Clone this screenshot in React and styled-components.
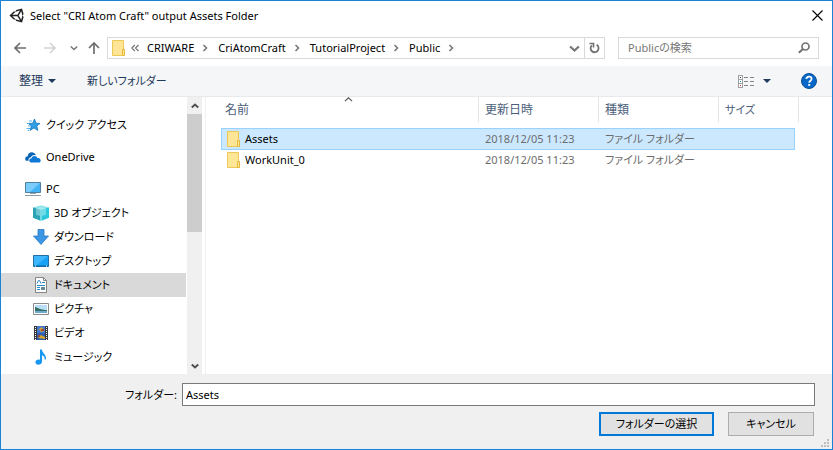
import React from "react";
import styled, { createGlobalStyle } from "styled-components";

const GlobalStyle = createGlobalStyle`
  *, *::before, *::after { box-sizing: border-box; }
  body { margin: 0; background: #fff; }
  body, button, input, table {
    font-family: "Noto Sans", "Noto Sans CJK JP", sans-serif;
    font-size: 11px;
    line-height: 16px;
    font-feature-settings: "palt";
    color: #000;
  }
  svg { display: block; flex: none; }
`;

const Dialog = styled.div`
  display: flex;
  flex-direction: column;
  min-height: 100vh;
  border: 1px solid #1883d7;
  background: #fff;
`;

const PlainButton = styled.button`
  display: flex;
  align-items: center;
  justify-content: center;
  padding: 0;
  border: 0;
  background: none;
  flex: none;
  white-space: nowrap;
  color: ${(p) => p.$color || "#000"};
`;

const TitleBar = styled.header`
  display: flex;
  align-items: center;
  gap: 6px;
  height: 29px;
  padding: 0 9px 0 8px;
`;

const Title = styled.h1`
  flex: 1;
  margin: 0;
  font-size: 11px;
  font-weight: 400;
  white-space: nowrap;
`;

const AddressRow = styled.div`
  display: flex;
  align-items: center;
  height: 36px;
  padding: 0 13px 0 12px;
`;

const NavGroup = styled.nav`
  display: flex;
  align-items: center;
  width: 94px;
  flex: none;
`;

const NavButton = styled(PlainButton)`
  width: ${(p) => p.$width}px;
  height: 22px;
  margin-right: ${(p) => p.$after}px;
`;

const AddressBox = styled.div`
  display: flex;
  align-items: center;
  flex: 1;
  min-width: 0;
  height: 22px;
  border: 1px solid #d9d9d9;
  padding-left: 4px;
  margin-right: 13px;
`;

const Crumbs = styled.div`
  display: flex;
  align-items: center;
  flex: 1;
  gap: 8px;
  min-width: 0;
  overflow: hidden;
  padding-left: 5px;
`;

const BoxButton = styled(PlainButton)`
  width: 20px;
  height: 20px;
  border-left: ${(p) => (p.$divided ? "1px solid #d9d9d9" : "0")};
`;

const SearchBox = styled.label`
  display: flex;
  align-items: center;
  width: 201px;
  height: 22px;
  padding: 0 8px 0 9px;
  border: 1px solid #d9d9d9;
`;

const SearchInput = styled.input`
  flex: 1;
  min-width: 0;
  padding: 0;
  border: 0;
  outline: 0;
  background: none;
  &::placeholder { color: #767676; opacity: 1; }
`;

const Toolbar = styled.div`
  display: flex;
  align-items: center;
  height: 31px;
  padding: 0 15px 0 18px;
  background: #f5f6f7;
  border-bottom: 1px solid #e8e9ea;
`;

const ToolButton = styled(PlainButton)`
  gap: ${(p) => p.$gap || 0}px;
  margin-right: ${(p) => p.$after || 0}px;
  font-size: ${(p) => (p.$large ? 12 : 11)}px;
`;

const Spacer = styled.div`
  flex: 1;
`;

const Body = styled.div`
  display: flex;
  flex: 1;
`;

const Sidebar = styled.nav`
  display: flex;
  flex-direction: column;
  width: 186px;
  flex: none;
  padding: 16px 1px 5px 0;
`;

const SideLink = styled.a`
  display: flex;
  align-items: center;
  gap: 5px;
  height: 24px;
  padding-left: ${(p) => (p.$nested ? 32 : 24)}px;
  margin-bottom: ${(p) => (p.$spaced ? 8 : 0)}px;
  background: ${(p) => (p.$current ? "#d9d9d9" : "transparent")};
  color: #000;
  text-decoration: none;
  white-space: nowrap;
`;

const ScrollBar = styled.div`
  display: flex;
  flex-direction: column;
  width: 15px;
  margin-right: 3px;
  flex: none;
  background: #f0f0f0;
`;

const ScrollThumb = styled.div`
  height: 118px;
  background: #cdcdcd;
`;

const ScrollButton = styled(PlainButton)`
  height: 17px;
`;

const FilePane = styled.main`
  flex: 1;
  min-width: 0;
  border-left: 1px solid #f0f0f0;
  padding: 0 33px 0 15px;
`;

const FileTable = styled.table`
  width: 100%;
  table-layout: fixed;
  border-collapse: separate;
  border-spacing: 0;
`;

const Col = styled.col`
  width: ${(p) => (p.$width ? `${p.$width}px` : "auto")};
`;

const HeadCell = styled.th`
  position: relative;
  height: 25px;
  padding: 0 0 0 ${(p) => (p.$first ? 4 : 6)}px;
  border-right: 1px solid #e5e5e5;
  font-size: ${(p) => (p.$kana ? 11 : 12)}px;
  font-weight: 400;
  text-align: left;
  color: #4c607a;
`;

const SortMark = styled.span`
  position: absolute;
  top: -2px;
  left: 50%;
  margin-left: -5px;
`;

const HeadGap = styled.tr`
  height: 6px;
`;

const FileRow = styled.tr`
  height: ${(p) => (p.$selected ? 22 : 20)}px;
  td {
    border: 0 solid #99d1ff;
    border-width: ${(p) => (p.$selected ? "1px 0" : 0)};
    background: ${(p) => (p.$selected ? "#cce8ff" : "transparent")};
  }
  td:first-child { border-left-width: ${(p) => (p.$selected ? 1 : 0)}px; }
  td:nth-child(4) { border-right-width: ${(p) => (p.$selected ? 1 : 0)}px; }
  td:last-child { border-width: 0; background: none; }
`;

const Cell = styled.td`
  height: 20px;
  padding: 0 0 0 6px;
  color: #6d6d6d;
  white-space: nowrap;
`;

const NameCell = styled(Cell)`
  padding-left: ${(p) => (p.$selected ? 5 : 6)}px;
  color: #000;
`;

const NameContent = styled.span`
  display: flex;
  align-items: center;
  gap: 4px;
`;

const Footer = styled.form`
  display: flex;
  flex-direction: column;
  gap: 6px;
  height: 75px;
  padding: 9px 17px 0 17px;
  background: #f0f0f0;
  position: relative;
`;

const FolderField = styled.div`
  display: flex;
  align-items: center;
`;

const FolderLabel = styled.label`
  width: 164px;
  padding-right: 5px;
  text-align: right;
`;

const FolderInput = styled.input`
  flex: 1;
  min-width: 0;
  height: 23px;
  padding: 0 3px;
  border: 1px solid #7a7a7a;
  border-radius: 0;
  background: #fff;
  outline: 0;
`;

const Actions = styled.div`
  display: flex;
  justify-content: flex-end;
  gap: 14px;
  padding-right: 1px;
`;

const ActionButton = styled.button`
  width: ${(p) => (p.$primary ? 115 : 86)}px;
  height: 24px;
  padding: 0;
  border: ${(p) => (p.$primary ? "2px solid #0078d7" : "1px solid #adadad")};
  background: #e1e1e1;
`;

const Grip = styled.span`
  position: absolute;
  right: 3px;
  bottom: 2px;
`;

const Chevron = ({ dir, color = "#777", size = 8, weight = 2 }) => {
  const d = {
    down: "M0.8 2.5 L4 5.5 L7.2 2.5",
    up: "M0.8 5.5 L4 2.5 L7.2 5.5",
    right: "M1.5 1 L4.5 4 L1.5 7",
  }[dir];
  return (
    <svg width={size} height={size} viewBox="0 0 8 8" fill="none" stroke={color} strokeWidth={weight}>
      <path d={d} />
    </svg>
  );
};

const Triangle = () => (
  <svg width="8" height="4" viewBox="0 0 8 4"><path d="M0 0H8L4 4Z" fill="#1e395b" /></svg>
);

const Arrow = ({ dir, color }) => (
  <svg width="12" height="12" viewBox="0 0 12 12" fill="none" stroke={color} strokeWidth="1.7">
    <path
      d={
        dir === "left"
          ? "M12 6H1M6 1L1 6L6 11"
          : dir === "right"
            ? "M0 6H11M6 1L11 6L6 11"
            : "M6 12V1M1 6L6 1L11 6"
      }
    />
  </svg>
);

const UnityIcon = () => (
  <svg width="15" height="15" viewBox="0 0 512 512" fill="#222">
    <path d="M498.1 206.4L445.3 14.7L248.2 66.1L219 116.1L159.8 115.7L15.5 256L159.8 396.3L219 395.9L248.2 445.9L445.3 497.3L498.1 305.6L468.1 256ZM223.8 124.2L374.6 86.5L288 232.3H114.9ZM223.8 387.8L114.9 279.7H288L374.6 425.5ZM416.8 401.8L330.2 256L416.8 110.2L458.6 256Z" />
  </svg>
);

const FolderIcon = () => (
  <svg width="14" height="16" viewBox="0 0 14 16">
    <path d="M0.5 0.5H11.5V9.5H12.5V15.5H0.5Z" fill="#ffe596" stroke="#edc856" />
    <path d="M10.5 15.5V9.5H12.5V15.5Z" fill="#ffe596" stroke="#e6b83c" />
  </svg>
);

const RefreshIcon = () => (
  <svg width="11" height="12" viewBox="0 0 11 12" fill="none" stroke="#707070" strokeWidth="1.8">
    <path d="M7.6 2.8A4 4 0 1 1 2.8 3.4" />
    <path d="M0.5 1.5H4.5V5.5" strokeWidth="1.6" />
  </svg>
);

const SearchIcon = () => (
  <svg width="12" height="12" viewBox="0 0 12 12" fill="none" stroke="#747474">
    <circle cx="7.5" cy="4.5" r="3.5" strokeWidth="1.7" />
    <path d="M5 7L0.8 10.8" strokeWidth="2.2" />
  </svg>
);

const ViewIcon = () => (
  <svg width="17" height="13" viewBox="0 0 17 13" shapeRendering="crispEdges">
    <path d="M0.5 0.5H4.5V12.5H0.5ZM0.5 4.5H4.5M0.5 8.5H4.5" fill="#fff" stroke="#a0a0a0" />
    <path d="M2 2h1v1H2z" fill="#333" />
    <path d="M2 6h1v1H2z" fill="#2b8be0" />
    <path d="M2 10h1v1H2z" fill="#d03030" />
    <path d="M6 2.5H10M12 2.5H16M6 6.5H10M12 6.5H16M6 10.5H10M12 10.5H16" stroke="#858585" />
  </svg>
);

const HelpIcon = () => (
  <svg width="16" height="16" viewBox="0 0 16 16">
    <circle cx="8" cy="8" r="7.5" fill="#0868c8" stroke="#094f9c" />
    <path d="M5.4 6.1C5.4 2.7 10.6 2.9 10.6 5.9C10.6 7.8 8.2 7.7 8.2 9.8" fill="none" stroke="#fff" strokeWidth="1.7" />
    <path d="M7.2 11H9.2V12.8H7.2Z" fill="#fff" />
  </svg>
);

const CloseIcon = () => (
  <svg width="11" height="11" viewBox="0 0 11 11" fill="none" stroke="#000" strokeWidth="1.1">
    <path d="M0.5 0.5L10.5 10.5M10.5 0.5L0.5 10.5" />
  </svg>
);

const sideIcons = {
  quick: (
    <>
      <path d="M9.5 2L11 6.2L15 6.4L11.8 9L12.8 13.4L9 10.9L5 13.4L6.4 9L3.4 6.4H7.6Z" fill="#2f9fe6" stroke="#1277bd" strokeWidth="0.8" />
      <path d="M4 4H7M2 6.5H4M3 9H5.5M1.5 11.5H5M2.5 13.5H4" stroke="#55b4ee" />
    </>
  ),
  drive: (
    <>
      <path d="M1 11.8C-0.8 9.5 0.6 7.2 2.7 7.2C2.8 4 6.6 2 9.4 4.3C10.3 4.7 10.7 5.6 10.9 6.2C8.5 5.6 6.7 6.4 6 8.2C4 8.4 3.3 10 3.6 11.8Z" fill="#0a64b4" />
      <path d="M6 13.5C3.6 13.5 3.6 9.4 6.6 9.3C7 6.2 11.8 6.2 12.4 9C15.2 8.3 17 11.9 14.6 13.5Z" fill="#0f78d4" />
    </>
  ),
  pc: (
    <>
      <path d="M0.5 1.5H15.5V11.5H0.5Z" fill="#42b4f5" stroke="#4f7f9d" />
      <path d="M1 2H15L5 11H1Z" fill="#79ccfb" />
      <path d="M5 13H11V12H5Z" fill="#8aa6b6" />
      <path d="M0 14.5H16" stroke="#8b9aa4" />
    </>
  ),
  cube: (
    <>
      <path d="M0 2.6L7 0.6H9L16 2.6V12.8L8 15.8L0 12.8Z" fill="#8fe3ea" />
      <path d="M0 2.6L7 4.6V15.4L0 12.8Z" fill="#2ba3b5" />
      <path d="M9 4.6L16 2.6V12.8L9 15.4Z" fill="#2bc8dc" />
      <path d="M3 3.5L8 2.4L13 3.5V9.8L8 11.2L3 9.8Z" fill="#c3f2f5" fillOpacity="0.45" />
      <path d="M7 4.6H9V15.4L8 15.8L7 15.4Z" fill="#74dbe5" />
    </>
  ),
  download: <path d="M5 0.5H11V7H15.5L8 15.5L0.5 7H5Z" fill="#3b97e3" stroke="#2779c4" strokeWidth="0.8" />,
  desktop: (
    <>
      <path d="M0.5 2.5H15.5V13.5H0.5Z" fill="#17a2f5" stroke="#236f9f" />
      <path d="M1 3H15L4 12H1Z" fill="#3db6fb" />
      <path d="M1 13H15" stroke="#0969a4" />
      <path d="M2 13H3M13 13H14" stroke="#fff" />
    </>
  ),
  doc: (
    <>
      <path d="M2.5 0.5H10.5L13.5 3.5V15.5H2.5Z" fill="#fff" stroke="#858585" />
      <path d="M10.5 0.5V3.5H13.5" fill="none" stroke="#858585" />
      <path d="M4 6.5L5.5 3.5H6.5L8 6.5M9 5.5H12M4 8.5H12M4 10.5H7M4 12.5H7" fill="none" stroke="#2689c9" />
      <path d="M8 10H12V13H8Z" fill="#668a91" />
    </>
  ),
  picture: (
    <>
      <path d="M0.5 2.5H15.5V13.5H0.5Z" fill="#fff" stroke="#8b8b8b" />
      <path d="M2 4H14V12H2Z" fill="#b9def5" />
      <path d="M2 6C5 6.5 7 9 14 9V10H2Z" fill="#356f66" />
      <path d="M2 10H14V12H2Z" fill="#6ea9d0" />
    </>
  ),
  video: (
    <>
      <path d="M1 1H15V15H1Z" fill="#35373b" />
      <path d="M4 1H12V8H4Z" fill="#4378cc" />
      <path d="M4 8H12V15H4Z" fill="#2e5dae" />
      <path d="M6 4L9 2L11 6L8 7ZM5 13L8 10L12 12V14Z" fill="#d4a72c" />
      <path d="M8 4H11V6H8ZM5 10H7V12H5Z" fill="#b14928" />
      <path d="M2.5 2V15M13.5 2V15" stroke="#fff" strokeDasharray="1 1" />
    </>
  ),
  music: (
    <path d="M7 0.5H9C9 4 13.7 5.2 12.9 10.4H11.6C11.8 8 10.6 6.8 9 6.3V12.5C9 16.5 2.4 16.8 2.4 13.3C2.4 10.6 5.2 9.8 7 10.8Z" fill="#1697f2" />
  ),
};

const SideIcon = ({ name }) => (
  <svg width="16" height="16" viewBox="0 0 16 16">{sideIcons[name]}</svg>
);

const places = [
  { icon: "quick", label: "クイック アクセス", spaced: true },
  { icon: "drive", label: "OneDrive", spaced: true },
  { icon: "pc", label: "PC" },
  { icon: "cube", label: "3D オブジェクト", nested: true },
  { icon: "download", label: "ダウンロード", nested: true },
  { icon: "desktop", label: "デスクトップ", nested: true },
  { icon: "doc", label: "ドキュメント", nested: true, current: true },
  { icon: "picture", label: "ピクチャ", nested: true },
  { icon: "video", label: "ビデオ", nested: true },
  { icon: "music", label: "ミュージック", nested: true },
];

const crumbs = ["CRIWARE", "CriAtomCraft", "TutorialProject", "Public"];

const files = [
  { name: "Assets", date: "2018/12/05 11:23", type: "ファイル フォルダー", selected: true },
  { name: "WorkUnit_0", date: "2018/12/05 11:23", type: "ファイル フォルダー" },
];

export default function App() {
  return (
    <>
      <GlobalStyle />
      <Dialog role="dialog" aria-labelledby="dialog-title">
        <TitleBar>
          <UnityIcon />
          <Title id="dialog-title">Select "CRI Atom Craft" output Assets Folder</Title>
          <PlainButton aria-label="Close"><CloseIcon /></PlainButton>
        </TitleBar>

        <AddressRow>
          <NavGroup>
            <NavButton $width={14} $after={16} aria-label="戻る"><Arrow dir="left" color="#6e6e6e" /></NavButton>
            <NavButton $width={14} $after={13} aria-label="進む"><Arrow dir="right" color="#d4d4d4" /></NavButton>
            <NavButton $width={8} $after={10} aria-label="最近表示した場所"><Chevron dir="down" weight={1.6} /></NavButton>
            <NavButton $width={12} $after={0} aria-label="上へ"><Arrow dir="up" color="#6e6e6e" /></NavButton>
          </NavGroup>
          <AddressBox>
            <FolderIcon />
            <Crumbs>
              <svg width="8" height="8" viewBox="0 0 8 8" fill="none" stroke="#6d6d6d" strokeWidth="1.1">
                <path d="M3.8 1L0.8 4L3.8 7M7.5 1L4.5 4L7.5 7" />
              </svg>
              {crumbs.map((c) => (
                <React.Fragment key={c}>
                  <PlainButton>{c}</PlainButton>
                  <Chevron dir="right" weight={1.6} />
                </React.Fragment>
              ))}
            </Crumbs>
            <BoxButton aria-label="履歴"><Chevron dir="down" size={11} weight={1.6} /></BoxButton>
            <BoxButton $divided aria-label="最新の情報に更新"><RefreshIcon /></BoxButton>
          </AddressBox>
          <SearchBox>
            <SearchInput aria-label="Publicの検索" placeholder="Publicの検索" />
            <SearchIcon />
          </SearchBox>
        </AddressRow>

        <Toolbar>
          <ToolButton $large $gap={5} $after={31} $color="#1e395b">整理<Triangle /></ToolButton>
          <ToolButton $color="#1e395b">新しいフォルダー</ToolButton>
          <Spacer />
          <ToolButton $gap={8} $after={30} aria-label="表示方法"><ViewIcon /><Triangle /></ToolButton>
          <ToolButton aria-label="ヘルプ"><HelpIcon /></ToolButton>
        </Toolbar>

        <Body>
          <Sidebar>
            {places.map((p) => (
              <SideLink
                key={p.label}
                href="#"
                $nested={p.nested}
                $spaced={p.spaced}
                $current={p.current}
                aria-current={p.current ? "true" : undefined}
              >
                <SideIcon name={p.icon} />
                {p.label}
              </SideLink>
            ))}
          </Sidebar>
          <ScrollBar>
            <ScrollButton aria-label="上へスクロール"><Chevron dir="up" color="#505050" /></ScrollButton>
            <ScrollThumb />
            <Spacer />
            <ScrollButton aria-label="下へスクロール"><Chevron dir="down" color="#505050" /></ScrollButton>
          </ScrollBar>
          <FilePane>
            <FileTable>
              <colgroup>
                <Col />
                <Col $width={120} />
                <Col $width={120} />
                <Col $width={76} />
                <Col $width={4} />
              </colgroup>
              <thead>
                <tr>
                  <HeadCell $first aria-sort="ascending">
                    名前
                    <SortMark><Chevron dir="up" color="#555" size={9} weight={1} /></SortMark>
                  </HeadCell>
                  <HeadCell>更新日時</HeadCell>
                  <HeadCell>種類</HeadCell>
                  <HeadCell $kana colSpan={2}>サイズ</HeadCell>
                </tr>
              </thead>
              <tbody>
                <HeadGap />
                {files.map((f) => (
                  <FileRow key={f.name} $selected={f.selected} aria-selected={!!f.selected}>
                    <NameCell $selected={f.selected}>
                      <NameContent><FolderIcon />{f.name}</NameContent>
                    </NameCell>
                    <Cell>{f.date}</Cell>
                    <Cell>{f.type}</Cell>
                    <Cell />
                    <Cell />
                  </FileRow>
                ))}
              </tbody>
            </FileTable>
          </FilePane>
        </Body>

        <Footer onSubmit={(e) => e.preventDefault()}>
          <FolderField>
            <FolderLabel htmlFor="folder">フォルダー:</FolderLabel>
            <FolderInput id="folder" defaultValue="Assets" />
          </FolderField>
          <Actions>
            <ActionButton type="submit" $primary>フォルダーの選択</ActionButton>
            <ActionButton type="button">キャンセル</ActionButton>
          </Actions>
          <Grip>
            <svg width="8" height="8" viewBox="0 0 8 8" fill="#bfbfbf">
              <path d="M6 0h2v2H6zM3 3h2v2H3zM6 3h2v2H6zM0 6h2v2H0zM3 6h2v2H3zM6 6h2v2H6z" />
            </svg>
          </Grip>
        </Footer>
      </Dialog>
    </>
  );
}
